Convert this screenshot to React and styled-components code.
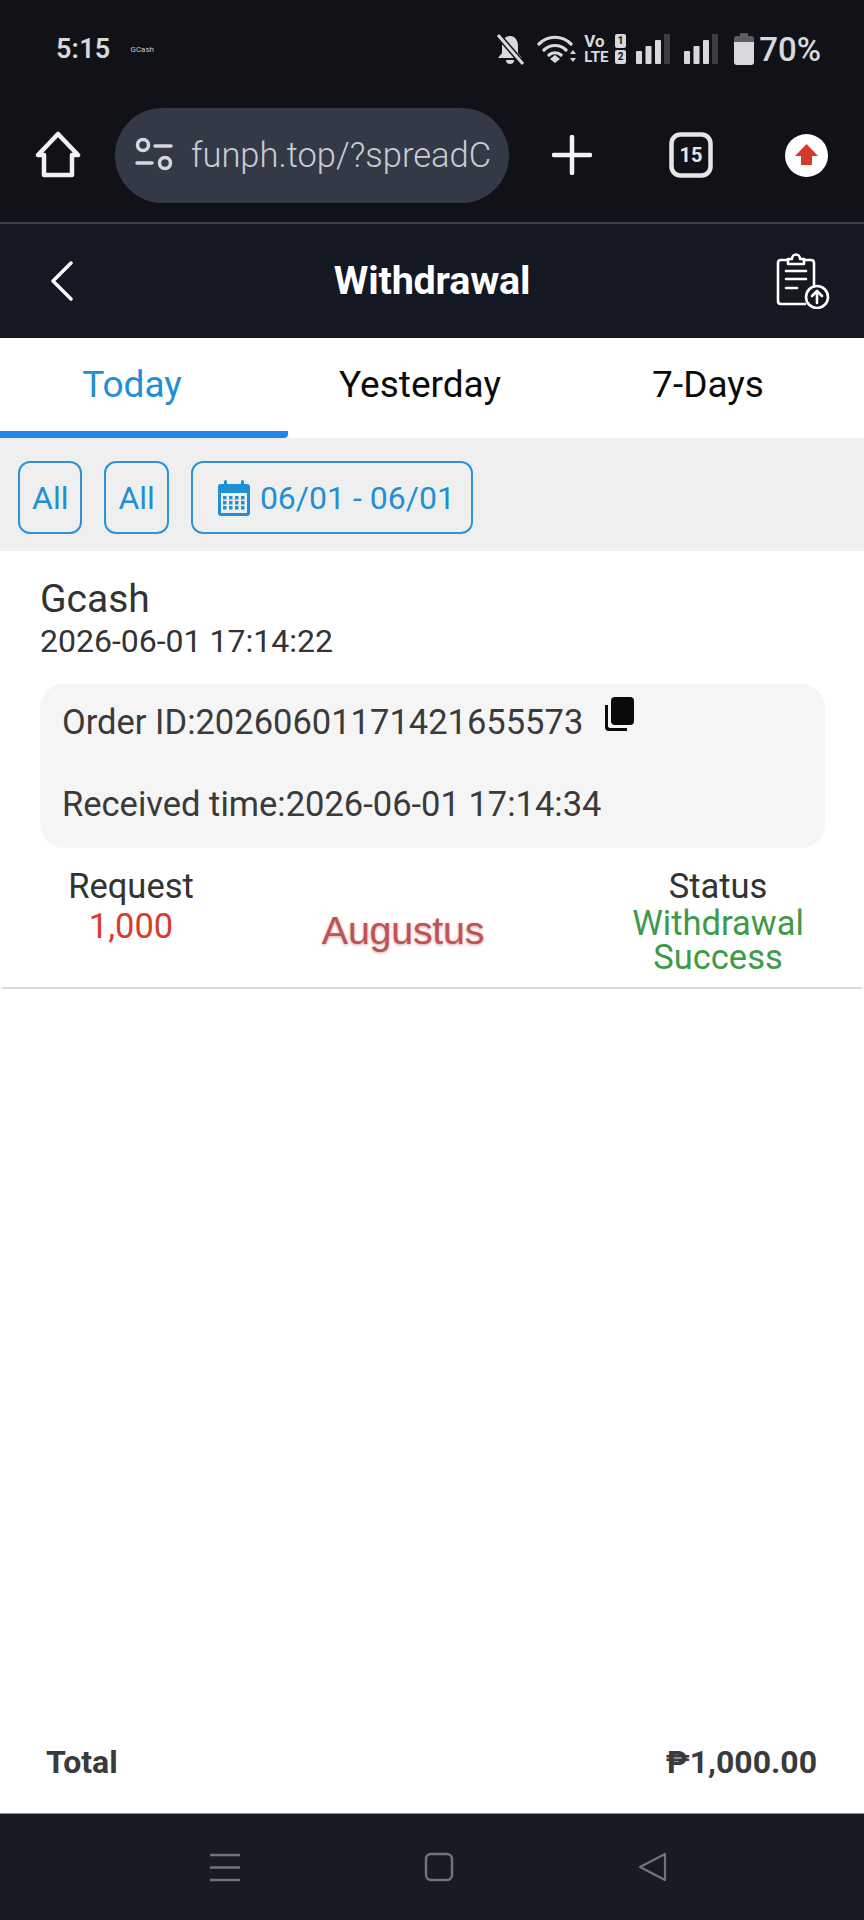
import React from "react";
import styled, { createGlobalStyle } from "styled-components";

const Global = createGlobalStyle`
  html, body { margin: 0; padding: 0; background: #fff; }
  * { box-sizing: border-box; }
  #root { width: 864px; height: 1920px; }
`;

const Page = styled.div`
  width: 864px; height: 1920px; display: flex; flex-direction: column;
  font-family: Roboto, "Liberation Sans", sans-serif; background: #fff; overflow: hidden;
`;
const StatusBar = styled.div`
  height: 88px; flex: none; background: #101218; color: #d8d9dc; display: flex; align-items: center;
  padding: 10px 43px 0 56px;
`;
const Clock = styled.span`font: 600 27px Roboto, sans-serif; letter-spacing: .2px;`;
const NotifText = styled.span`font: 400 8px Roboto, sans-serif; margin-left: 20px; color: #c8c9cc;`;
const StatusIcons = styled.div`margin-left: auto; display: flex; align-items: center;`;
const IconSlot = styled.span`display: flex; margin-left: ${p => p.$left}px;`;
const Percent = styled.span`font: 500 33px Roboto, sans-serif; margin-left: 5px;`;
const VoLte = styled.div`display: flex; flex-direction: column; width: 42px; gap: 1px;`;
const VoRow = styled.div`display: flex; justify-content: space-between; align-items: center; font: 700 ${p => p.$size}px/15px Roboto, sans-serif;`;
const SimBox = styled.span`
  width: 11px; height: 14px; background: #d8d9dc; color: #101218; border-radius: 2px; font: 700 10px/14px Roboto, sans-serif; text-align: center;
`;

const BrowserBar = styled.div`
  height: 134px; flex: none; background: #101218; display: flex; align-items: center; padding: 0 0 0 35px;
`;
const UrlPill = styled.div`
  width: 394px; height: 95px; margin-left: 34px; border-radius: 48px; background: #333947; color: #c9ccd3;
  display: flex; align-items: center; padding-left: 20px; gap: 18px; overflow: hidden; font: 300 34.5px Roboto, sans-serif; white-space: nowrap;
`;
const PlusSlot = styled.div`margin-left: 43px; display: flex;`;
const TabsSlot = styled.div`margin-left: 77px; display: flex;`;
const UpdateSlot = styled.div`margin-left: 72px; display: flex;`;

const Header = styled.div`
  height: 116px; flex: none; background: #131822; border-top: 2px solid #3b3f47; display: grid; grid-template-columns: 1fr auto 1fr; align-items: center;
  padding: 0 34px; color: #fff;
`;
const HeaderEnd = styled.div`display: flex; justify-content: flex-end;`;
const HeaderStart = styled.div`display: flex; margin-left: 16px;`;
const Title = styled.h1`margin: 0 0 2px; font: 700 39.5px Roboto, sans-serif; color: #fff; letter-spacing: -.2px;`;

const Tabs = styled.div`height: 100px; flex: none; display: grid; grid-template-columns: 288px 288px 288px;`;
const Tab = styled.div`
  display: flex; align-items: center; justify-content: center; padding: 0 24px 0 0; font-size: 37px;
  color: ${p => (p.$active ? "#1f8fd6" : "#0a0a0a")};
  border-bottom: 7px solid ${p => (p.$active ? "#2285ea" : "transparent")};
  border-radius: 0 0 4px 0;
`;
const Filters = styled.div`
  height: 113px; flex: none; background: #efefef; display: flex; align-items: center; gap: 22px; padding: 6px 0 0 18px;
`;
const Chip = styled.div`
  height: 73px; padding: 0 ${p => (p.$date ? "16px 0 24px" : "12px")}; border: 2px solid #2a94d4; border-radius: 12px; color: #1f8fd6; font-size: 32px;
  display: flex; align-items: center; gap: 9px; flex: none;
`;

const Record = styled.div`margin: 0 2px; padding: 26px 38px 0; border-bottom: 2px solid #dcdcdc; height: 438px; flex: none; color: #333;`;
const Channel = styled.div`font-size: 39px; line-height: 44px;`;
const Stamp = styled.div`font-size: 32px; line-height: 40px;`;
const InfoCard = styled.div`
  margin-top: 23px; height: 164px; width: 785px; background: #f5f5f5; border-radius: 24px; padding: 18px 22px 24px; font-size: 34.5px; color: #3a3a3a;
  display: flex; flex-direction: column; justify-content: space-between;
`;
const InfoRow = styled.div`display: flex; align-items: flex-start; gap: 20px; line-height: 40px;`;
const CopySlot = styled.span`display: flex; margin-top: -6px;`;
const Stats = styled.div`display: grid; grid-template-columns: 182px 362px 241px; margin-top: 20px; text-align: center; font-size: 34.5px; line-height: 36px;`;
const StatCol = styled.div`display: flex; flex-direction: column; align-items: center; padding-left: ${p => p.$pad || 0}px;`;
const Label = styled.div`color: #333;`;
const Amount = styled.div`color: #d93c2b; margin-top: 4px;`;
const Success = styled.div`color: #3f9a48; width: 200px; line-height: 34px; margin-top: 2px;`;
const Signature = styled.div`
  font: 400 39.5px "Liberation Sans", sans-serif; color: #c25252; margin-top: 40px; text-shadow: 0 1px 3px rgba(150,50,50,.45);
  letter-spacing: -.3px;
`;

const Spacer = styled.div`flex: 1;`;
const TotalBar = styled.div`
  height: 70px; flex: none; display: flex; justify-content: space-between; align-items: flex-start; padding: 0 47px 0 46px; color: #3a3a3c;
  font: 700 32px Roboto, sans-serif;
`;
const Navbar = styled.div`
  height: 107px; flex: none; background: #181b22; border-top: 1px solid #8c8c8c; display: flex; align-items: center;
  padding: 0 0 0 210px; gap: 184px;
`;

const HomeIcon = () => (
  <svg width="46" height="48" viewBox="0 0 46 48" fill="none" stroke="#f2f2f2" strokeWidth="4.5" strokeLinejoin="round">
    <path d="M23 3 L43 24 H37 V44 H9 V24 H3 Z" />
  </svg>
);
const TuneIcon = () => (
  <svg width="38" height="36" viewBox="0 0 38 36" fill="none" stroke="#d5d7dc" strokeWidth="3.5" strokeLinecap="round">
    <circle cx="8" cy="8" r="5.5" /><path d="M20 9 H36 M2 26 H17" /><circle cx="30" cy="26" r="5.5" />
  </svg>
);
const PlusIcon = () => (
  <svg width="40" height="40" viewBox="0 0 40 40" stroke="#f2f2f2" strokeWidth="4.5" strokeLinecap="round">
    <path d="M20 2 V38 M2 20 H38" />
  </svg>
);
const TabCount = () => (
  <svg width="44" height="46" viewBox="0 0 44 46" fill="none">
    <rect x="2.5" y="2.5" width="39" height="41" rx="9" stroke="#e6e6e6" strokeWidth="4.5" />
    <text x="22" y="30" textAnchor="middle" fill="#e6e6e6" fontFamily="Roboto" fontWeight="700" fontSize="20">15</text>
  </svg>
);
const UpdateIcon = () => (
  <svg width="43" height="43" viewBox="0 0 43 43">
    <circle cx="21.5" cy="21.5" r="21.5" fill="#fff" />
    <path d="M21.5 10 L33 22 H27 V31 H16 V22 H10 Z" fill="#d33a2c" />
  </svg>
);
const BellOff = () => (
  <svg width="30" height="32" viewBox="0 0 30 32" fill="#d8d9dc">
    <path d="M15 3 C9.5 3 7 8 7 13 V20 L3 25 H27 L23 20 V13 C23 8 20.5 3 15 3 Z M11 27 H19 C19 30 17 31 15 31 C13 31 11 30 11 27 Z" />
    <path d="M3 2 L28 31" stroke="#101218" strokeWidth="6" />
    <path d="M3 2 L28 31" stroke="#d8d9dc" strokeWidth="3" />
  </svg>
);
const Wifi = () => (
  <svg width="40" height="30" viewBox="0 0 40 30" fill="none" stroke="#d8d9dc" strokeWidth="3.2" strokeLinecap="round">
    <path d="M2 10 C11 1 25 1 34 10 M7 16 C13 10 23 10 29 16 M12 21 C15 18 21 18 24 21" />
    <path d="M13 25 L18 21 L23 25 L18 29 Z" fill="#d8d9dc" stroke="none" />
    <path d="M33 20 L36 16 L39 20 Z M33 24 L39 24 L36 28 Z" fill="#d8d9dc" stroke="none" />
  </svg>
);
const Signal = () => (
  <svg width="34" height="30" viewBox="0 0 34 30" fill="#d8d9dc">
    <rect x="0" y="17" width="6" height="13" rx="1" /><rect x="9.5" y="12" width="6" height="18" rx="1" />
    <rect x="19" y="6" width="6" height="24" rx="1" /><rect x="28" y="0" width="6" height="30" rx="1" fill="#3c3e44" />
  </svg>
);
const Battery = () => (
  <svg width="20" height="32" viewBox="0 0 20 32">
    <rect x="6" y="0" width="8" height="4" rx="1" fill="#5c5e63" />
    <path d="M3 3 H17 Q20 3 20 6 V9 H0 V6 Q0 3 3 3 Z" fill="#5c5e63" />
    <path d="M0 9 H20 V29 Q20 32 17 32 H3 Q0 32 0 29 Z" fill="#d8d9dc" />
  </svg>
);
const BackIcon = () => (
  <svg width="24" height="40" viewBox="0 0 24 40" fill="none" stroke="#fff" strokeWidth="3.4" strokeLinecap="round" strokeLinejoin="round">
    <path d="M21 2 L3 20 L21 38" />
  </svg>
);
const ClipUp = () => (
  <svg width="54" height="56" viewBox="0 0 54 56" fill="none" stroke="#fff" strokeWidth="2.6" strokeLinecap="round" strokeLinejoin="round">
    <path d="M12 7 H5 Q2 7 2 10 V48 Q2 51 5 51 H29 M38 32 V10 Q38 7 35 7 H28" />
    <path d="M12 11 V6 H16 C16 0 24 0 24 6 H28 V11 Z" />
    <path d="M10 18 H30 M10 26 H30 M10 35 H21" strokeWidth="2.6" />
    <circle cx="41" cy="44" r="11" />
    <path d="M41 50 V38 M36 43 L41 38 L46 43" />
  </svg>
);
const CalendarIcon = () => (
  <svg width="34" height="36" viewBox="0 0 32 36" fill="#1f8fd6">
    <rect x="0" y="4" width="32" height="32" rx="3" />
    <rect x="3" y="13" width="26" height="20" fill="#efefef" />
    <rect x="6" y="0" width="3" height="8" rx="1.5" /><rect x="23" y="0" width="3" height="8" rx="1.5" />
    {[16, 21, 26].flatMap(y => [6, 12, 18, 24].map(x => <rect key={x + "-" + y} x={x - 1} y={y} width="3.5" height="3.5" />))}
  </svg>
);
const CopyIcon = () => (
  <svg width="32" height="36" viewBox="0 0 32 36" fill="#0a0a0a">
    <path d="M2 9 V31 Q2 35 6 35 H24 V32 H7 Q5 32 5 30 V9 Z" />
    <rect x="8" y="1" width="23" height="28" rx="4" />
  </svg>
);
const MenuNav = () => (
  <svg width="30" height="29" viewBox="0 0 30 29" stroke="#70747b" strokeWidth="2.6"><path d="M0 2 H30 M0 14.5 H30 M0 27 H30" /></svg>
);
const HomeNav = () => (
  <svg width="30" height="30" viewBox="0 0 30 30" fill="none" stroke="#70747b" strokeWidth="2.4"><rect x="2" y="2" width="26" height="26" rx="5" /></svg>
);
const BackNav = () => (
  <svg width="30" height="30" viewBox="0 0 30 30" fill="none" stroke="#70747b" strokeWidth="2.2" strokeLinejoin="round"><path d="M27 2 V28 L2 15 Z" /></svg>
);

export default function App() {
  return (
    <Page>
      <Global />
      <StatusBar>
        <Clock>5:15</Clock>
        <NotifText>GCash</NotifText>
        <StatusIcons>
          <BellOff />
          <IconSlot $left={12}><Wifi /></IconSlot>
          <IconSlot $left={7}>
            <VoLte>
              <VoRow $size={17}><span>Vo</span><SimBox>1</SimBox></VoRow>
              <VoRow $size={15}><span>LTE</span><SimBox>2</SimBox></VoRow>
            </VoLte>
          </IconSlot>
          <IconSlot $left={10}><Signal /></IconSlot>
          <IconSlot $left={14}><Signal /></IconSlot>
          <IconSlot $left={16}><Battery /></IconSlot>
          <Percent>70%</Percent>
        </StatusIcons>
      </StatusBar>
      <BrowserBar>
        <HomeIcon />
        <UrlPill><TuneIcon /><span>funph.top/?spreadC</span></UrlPill>
        <PlusSlot><PlusIcon /></PlusSlot>
        <TabsSlot><TabCount /></TabsSlot>
        <UpdateSlot><UpdateIcon /></UpdateSlot>
      </BrowserBar>
      <Header>
        <HeaderStart><BackIcon /></HeaderStart>
        <Title>Withdrawal</Title>
        <HeaderEnd><ClipUp /></HeaderEnd>
      </Header>
      <Tabs>
        <Tab $active>Today</Tab>
        <Tab>Yesterday</Tab>
        <Tab>7-Days</Tab>
      </Tabs>
      <Filters>
        <Chip>All</Chip>
        <Chip>All</Chip>
        <Chip $date><CalendarIcon />06/01 - 06/01</Chip>
      </Filters>
      <Record>
        <Channel>Gcash</Channel>
        <Stamp>2026-06-01 17:14:22</Stamp>
        <InfoCard>
          <InfoRow><span>Order ID:20260601171421655573</span><CopySlot><CopyIcon /></CopySlot></InfoRow>
          <InfoRow>Received time:2026-06-01 17:14:34</InfoRow>
        </InfoCard>
        <Stats>
          <StatCol>
            <Label>Request</Label>
            <Amount>1,000</Amount>
          </StatCol>
          <StatCol><Signature>Augustus</Signature></StatCol>
          <StatCol $pad={27}>
            <Label>Status</Label>
            <Success>Withdrawal Success</Success>
          </StatCol>
        </Stats>
      </Record>
      <Spacer />
      <TotalBar><span>Total</span><span>₱1,000.00</span></TotalBar>
      <Navbar><MenuNav /><HomeNav /><BackNav /></Navbar>
    </Page>
  );
}
